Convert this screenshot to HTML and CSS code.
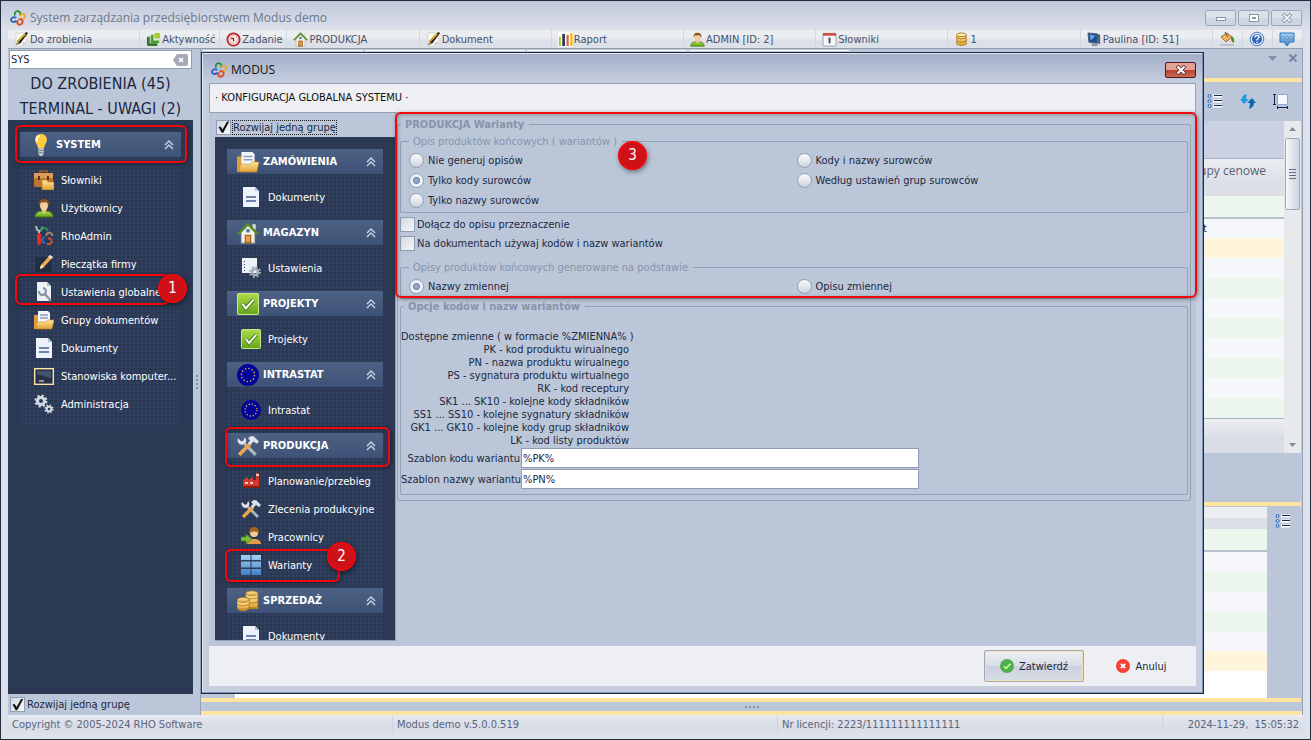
FILE: index.html
```html
<!DOCTYPE html>
<html lang="pl">
<head>
    <meta charset="UTF-8">
    <title>System zarządzania przedsiębiorstwem Modus demo</title>
    <link rel="stylesheet" href="styles.css">
</head>
<body>
<!-- icons -->
<svg class="sprite" width="0" height="0" aria-hidden="true">
    <defs>
        <linearGradient id="gold" x1="0" y1="0" x2="0" y2="1"><stop offset="0" stop-color="#ffe9a3"/><stop offset="1" stop-color="#e0a030"/></linearGradient>
        <linearGradient id="blue" x1="0" y1="0" x2="0" y2="1"><stop offset="0" stop-color="#a5d4f3"/><stop offset="1" stop-color="#3f7fc4"/></linearGradient>
        <linearGradient id="green" x1="0" y1="0" x2="0" y2="1"><stop offset="0" stop-color="#aedb4b"/><stop offset="1" stop-color="#64a51c"/></linearGradient>
    </defs>
    <symbol id="logo" viewBox="0 0 16 16">
        <g fill="none" stroke-width="1.800">
            <path d="M5 5.500C4 2 6.500 .8 8.500 1.300s2.500 2.700 1.200 4.200" stroke="#179437"/>
            <path d="M10 5.500C11 3 15 3.500 15 6.200s-2.800 4-5 2.300" stroke="#f0a818"/>
            <path d="M8.500 9.500c2.500-1 4.800.500 4 3s-4 3-5 1 0-2.500 1-3" stroke="#de4a22"/>
            <path d="M6.500 10.500c-2 2.500-5.500 1.500-5.500-.500S3.500 6 6.200 8" stroke="#2a63c4"/>
        </g>
    </symbol>
    <symbol id="note" viewBox="0 0 16 16">
        <path d="M2 1h11v10l-4 4H2z" fill="#fbfbf6" stroke="#d3d3cf"/>
        <path d="M13 11H9v4z" fill="#ccd"/>
        <path d="M2 14l2-5 9-9 2 1-8 11z" fill="#2b2418"/>
        <path d="M4 10l8-8" stroke="#d8ac34" stroke-width="1.800"/>
        <path d="M2 14l2-4 1.500 1.500z" fill="#e8c878"/>
    </symbol>
    <symbol id="layers" viewBox="0 0 16 16">
        <path d="M1 5h3v7h8v3H3q-2 0-2-2z" fill="#2f7b2a"/>
        <path d="M5 3h3v6h6v3H7q-2 0-2-2z" fill="#4f9f30"/>
        <rect x="9" y="1" width="6" height="6" rx="1" fill="#a4cf29"/>
    </symbol>
    <symbol id="clock" viewBox="0 0 16 16">
        <circle cx="8" cy="8" r="6.500" fill="#fff" stroke="#b9252b" stroke-width="2"/>
        <circle cx="8" cy="8" r="4.200" fill="#fff" stroke="#e59a9a"/>
        <path d="M5 7h3v3" fill="none" stroke="#a22" stroke-width="1.500"/>
    </symbol>
    <symbol id="house" viewBox="0 0 20 20">
        <path d="M14 2h3v5h-3z" fill="#ddd"/>
        <path d="M4 9l6-6 6 6v10H4z" fill="#f4f2ea" stroke="#b9b7aa"/>
        <path d="M1 11l9-9 9 9" fill="none" stroke="#588d24" stroke-width="2.200"/>
        <circle cx="10" cy="8" r="1.800" fill="#5379b5"/>
        <path d="M7.500 12h5v7h-5z" fill="#e29a43" stroke="#9a5a20"/>
    </symbol>
    <symbol id="chart" viewBox="0 0 16 16">
        <path d="M0 0h16v16H0z" fill="#fff"/>
        <path d="M1 5h2v10H1z" fill="#a9c522"/><path d="M4.500 2h3v13h-3z" fill="#26405a"/>
        <path d="M9 3h2.500v12H9z" fill="#e45e5e"/><path d="M13 1h2.500v14H13z" fill="#eebb0a"/>
    </symbol>
    <symbol id="user" viewBox="0 0 20 20">
        <path d="M1 19q0-5 6-6h6q6 1 6 6z" fill="url(#green)" stroke="#467a14"/>
        <path d="M7 11h6l-3 5z" fill="#f0c48a"/>
        <ellipse cx="10" cy="7.500" rx="4" ry="5" fill="#f4cf9c"/>
        <path d="M5 8Q4 1 10 1t5 7q-1-3-3-4-3 1-5 0-1 1-2 4z" fill="#87521d"/>
    </symbol>
    <symbol id="calendar" viewBox="0 0 16 16">
        <rect x="1" y="2" width="14" height="13" rx="1" fill="#f5f7fb" stroke="#8f9db5"/>
        <path d="M1 1h14v3H1z" fill="#c95245"/>
        <path d="M7 6h2v6H7z" fill="#444"/>
    </symbol>
    <symbol id="database" viewBox="0 0 16 16">
        <path d="M3 3v10q5 3 10 0V3z" fill="url(#gold)" stroke="#b07a1c"/>
        <ellipse cx="8" cy="3" rx="5" ry="2" fill="#ffeeb8" stroke="#b07a1c"/>
        <path d="M3 6q5 3 10 0M3 9.500q5 3 10 0" fill="none" stroke="#b07a1c"/>
    </symbol>
    <symbol id="monitor" viewBox="0 0 16 16">
        <path d="M1 1l10 1v10L2 11z" fill="#1c4d9c" stroke="#53606f"/>
        <path d="M3 3l6 1-5 5z" fill="#6ea6e2"/>
        <path d="M11 2l3 1v10l-3-1z" fill="#555f6e"/><path d="M5 12h5l2 3H5z" fill="#8d98a5"/>
    </symbol>
    <symbol id="bucket" viewBox="0 0 16 16">
        <path d="M2 6l6-4 5 4-6 5z" fill="#f0b35c" stroke="#a8692c"/>
        <path d="M6 1l3 5" stroke="#444"/>
        <path d="M12 5q4 1 3 7-3-1-3-5z" fill="#49922c"/>
        <path d="M1 13h14v2H1z" fill="#bdc3ca"/>
    </symbol>
    <symbol id="help" viewBox="0 0 16 16">
        <circle cx="8" cy="8" r="6.800" fill="#dfeafb" stroke="#4c7fc0"/>
        <circle cx="8" cy="8" r="5" fill="#3468b6"/>
        <path d="M6 6.500q0-2 2-2t2 1.700Q10 7.500 8 8.500v1M8 10.800v1.400" fill="none" stroke="#fff" stroke-width="1.300"/>
    </symbol>
    <symbol id="chat" viewBox="0 0 16 16">
        <path d="M1 2h14v9h-4l-3 4-3-4H1z" fill="url(#blue)" stroke="#2d78bd"/>
        <path d="M3 6h2v2H3zM7 6h2v2H7zM11 6h2v2h-2z" fill="#fff" stroke="#1d5a99" stroke-width=".500"/>
    </symbol>
    <symbol id="list" viewBox="0 0 16 16">
        <path d="M6 1.500h9v3H6zM6 6.500h9v3H6zM6 11.500h9v3H6z" fill="#fff"/>
        <path d="M7 2.500h8M7 7.500h8M7 12.500h8" stroke="#20283c"/>
        <g fill="#bfe0ff" stroke="#2d62b5"><circle cx="2.500" cy="3" r="1.500"/><circle cx="2.500" cy="8" r="1.500"/><circle cx="2.500" cy="13" r="1.500"/></g>
    </symbol>
    <symbol id="refresh" viewBox="0 0 16 16">
        <path d="M7 1Q2 2 2 6H0l4 5 5-5H6q0-3 1-5z" fill="#1b9be0"/>
        <path d="M9 16q5-2 5-6h2l-4-5-5 5h3q0 3-1 6z" fill="#0d68b0"/>
    </symbol>
    <symbol id="resize" viewBox="0 0 16 16">
        <path d="M4.500 1.500h10v10h-10z" fill="#f4f8ff" stroke="#86aade"/>
        <path d="M1.500 1v11M0 1.500h3M0 11.500h3M4 14.500h11M4.500 13v3M14.500 13v3" fill="none" stroke="#12204a"/>
    </symbol>
    <symbol id="bulb" viewBox="0 0 20 20">
        <path d="M10 0c-5 0-7 5-4 9l1.500 4h5L14 9c3-4 1-9-4-9z" fill="#ffc940"/>
        <path d="M9 2C6 2 5.500 5 7 7" fill="none" stroke="#fff3c4" stroke-width="2"/>
        <path d="M7.500 13h5v5l-1.500 2H9l-1.500-2z" fill="#c9ccd1"/>
        <path d="M7.500 15h5M7.500 17h5" stroke="#777e88"/>
    </symbol>
    <symbol id="briefcase" viewBox="0 0 20 20">
        <path d="M6 4V1h7v3" fill="none" stroke="#a35b1f" stroke-width="1.600"/>
        <rect x="0" y="3" width="19" height="14" rx="1" fill="#bd7432"/>
        <path d="M0 3h19v5H0z" fill="#dd9c5b"/><path d="M4 6h2v4H4zM13 6h2v4h-2z" fill="#61330f"/>
        <path d="M8 10h5l1 2h6v8H8z" fill="url(#gold)" stroke="#bc8028" stroke-width=".700"/>
    </symbol>
    <symbol id="knife" viewBox="0 0 20 20">
        <path d="M2 0l1 4 3 1 3-4M5 4v7" fill="none" stroke="#b8c0ca" stroke-width="1.800"/>
        <rect x="3" y="7" width="4" height="12" rx="2" fill="#e0302a"/>
        <g fill="none" stroke-width="1.800"><path d="M7 6c0-5 6-5 7-1" stroke="#1f9a45"/><path d="M12 10c1-5 7-4 6 0" stroke="#a08a6a"/><path d="M14 12c6 1 4 7-1 6" stroke="#dd5324"/><path d="M11 11c-4 1-3 6 0 6" stroke="#2c70c8"/></g>
    </symbol>
    <symbol id="pencil" viewBox="0 0 20 20">
        <path d="M1 3h16v15H1z" fill="#222e44"/>
        <path d="M6 15l1-4L16 1l3 2-9 10z" fill="#f0a850"/>
        <path d="M6 15l1-4 3 2z" fill="#fff0d0"/><path d="M14 3l2-2 3 2-2 2z" fill="#e8dcd4"/>
    </symbol>
    <symbol id="docwrench" viewBox="0 0 20 20">
        <path d="M3 0h10l4 4v15H3z" fill="#eef1f7"/><path d="M13 0v4h4z" fill="#b8c1d2"/>
        <path d="M5 9a3.500 3.500 0 1 0 4-3M10 11l7 8" fill="none" stroke="#8792a5" stroke-width="2.200"/>
    </symbol>
    <symbol id="folder" viewBox="0 0 20 20">
        <path d="M0 5h6l1 2h9v12H0z" fill="#df9b3c"/>
        <path d="M4 1h10l2 2v11H4z" fill="#f2f5fb"/><path d="M6 5h8M6 8h8" stroke="#8d9cc0" stroke-width="1.300"/>
        <path d="M2 19l1-7h9l2-2h6l-2 9z" fill="url(#gold)" stroke="#c98527" stroke-width=".600"/>
    </symbol>
    <symbol id="doc" viewBox="0 0 20 20">
        <path d="M2 0h12l4 4v16H2z" fill="#eef2fa"/><path d="M14 0v4h4z" fill="#b5bfd3"/>
        <path d="M5 10h10M5 14h10" stroke="#7083ad" stroke-width="1.800"/>
    </symbol>
    <symbol id="screen" viewBox="0 0 20 20">
        <rect x=".700" y="2.700" width="18.600" height="15.600" fill="#243149" stroke="#ffe3a0" stroke-width="1.400"/>
        <path d="M3 5h14v7L3 8z" fill="#45536d"/><path d="M5 15h5" stroke="#fff"/>
    </symbol>
    <symbol id="gears" viewBox="0 0 20 20">
        <g fill="none" stroke="#d4dae2"><circle cx="7" cy="7" r="3.500" stroke-width="3"/><circle cx="7" cy="7" r="5.500" stroke-width="2" stroke-dasharray="2.200 2.100"/>
            <circle cx="15" cy="15" r="2.300" stroke-width="2"/><circle cx="15" cy="15" r="3.800" stroke-width="1.600" stroke-dasharray="1.500 1.500"/></g>
    </symbol>
    <symbol id="docgear" viewBox="0 0 20 20">
        <path d="M1 0h15v15H1z" fill="#eef2f8"/><path d="M3.500 3v10" stroke="#34415c" stroke-dasharray="1 2"/>
        <g fill="none" stroke="#a4acb8"><circle cx="14" cy="14" r="3" stroke-width="2.500"/><circle cx="14" cy="14" r="5" stroke-width="1.800" stroke-dasharray="2 1.900"/></g>
    </symbol>
    <symbol id="check" viewBox="0 0 20 20">
        <rect x=".500" y=".500" width="19" height="19" rx="1" fill="url(#green)" stroke="#c6e884"/>
        <path d="M5 10l3 4 7-8" fill="none" stroke="#4d7d1c" stroke-width="3.600"/><path d="M5 10l3 4 7-8" fill="none" stroke="#fff" stroke-width="1.800"/>
    </symbol>
    <symbol id="eu" viewBox="0 0 20 20">
        <circle cx="10" cy="10" r="10" fill="#04049b"/>
        <circle cx="10" cy="10" r="6" fill="none" stroke="#d8b636" stroke-width="1.300" stroke-dasharray="1.300 1.840"/>
    </symbol>
    <symbol id="tools" viewBox="0 0 20 20">
        <path d="M7 8l10 10" stroke="#aab3bf" stroke-width="3"/>
        <path d="M1 3a4 4 0 0 0 6 5 4 4 0 0 0 0-6l-1 3-2 1z" fill="#dfe4ea"/>
        <path d="M2 18l10-10" stroke="#eca64d" stroke-width="3.400"/>
        <path d="M10 3q4-4 7 0l3 3-2 2-3-2-3 3-2-2 2-2z" fill="#dce2e9"/>
    </symbol>
    <symbol id="factory" viewBox="0 0 20 20">
        <path d="M2 17V9l5-3v3l5-3v3h3V2h3v15z" fill="#d5372b"/><path d="M15 4h3M4 12h3M9 12h3" stroke="#fff" stroke-width="1.500"/><path d="M2 15h16v2H2z" fill="#8f1b14"/>
    </symbol>
    <symbol id="worker" viewBox="0 0 20 20">
        <path d="M6 17q1-5 5-5h4q5 1 5 5z" fill="#e09a4b"/><circle cx="13" cy="6" r="4" fill="#f4cc9a"/>
        <path d="M8 6q0-6 5-6t5 6q-5-3-10 0z" fill="#a5631f"/>
        <path d="M0 10h5V7l6 5-6 5v-3H0z" fill="#7bbd32" stroke="#41781a" stroke-width=".600"/>
    </symbol>
    <symbol id="tiles" viewBox="0 0 20 20">
        <path d="M0 0h9.500v5H0zM10.500 0H20v5h-9.500zM0 6.500h9.500v6H0zM10.500 6.500H20v6h-9.500zM0 14h9.500v6H0zM10.500 14H20v6h-9.500z" fill="url(#blue)"/>
    </symbol>
    <symbol id="coins" viewBox="0 0 20 20">
        <g fill="url(#gold)" stroke="#aa741a" stroke-width=".700">
            <path d="M8 3v14h11V3z"/><ellipse cx="13.500" cy="3" rx="5.500" ry="2.200"/><path d="M8 7q5 2 11 0M8 11q5 2 11 0M8 15q5 2 11 0" fill="none"/>
            <path d="M0 9v8q5 4 11 0V9z"/><ellipse cx="5.500" cy="9" rx="5.500" ry="2.200"/><path d="M0 13q5 3 11 0M0 16q5 3 11 0" fill="none"/>
        </g>
    </symbol>
    <symbol id="up" viewBox="0 0 10 10">
        <path d="M1 5l4-4 4 4M1 9l4-4 4 4" fill="none" stroke="#cbd4e4" stroke-width="1.400"/>
    </symbol>
    <symbol id="cross" viewBox="0 0 10 10">
        <path d="M1.500 1.500l7 7M8.500 1.500l-7 7" fill="none" stroke="currentColor" stroke-width="2"/>
    </symbol>
    <symbol id="ok" viewBox="0 0 14 14">
        <circle cx="7" cy="7" r="7" fill="#4caf50"/><path d="M4 7.200l2 2.200 4.500-4.600" fill="none" stroke="#ccff90" stroke-width="1.600"/>
    </symbol>
    <symbol id="no" viewBox="0 0 14 14">
        <circle cx="7" cy="7" r="7" fill="#f44336"/><path d="M4.800 4.800l4.400 4.400M9.200 4.800L4.800 9.200" stroke="#fff" stroke-width="1.800"/>
    </symbol>
</svg>

<div class="app">
    <header class="titlebar">
        <svg class="ico16"><use href="#logo"/></svg>
        <h1>System zarządzania przedsiębiorstwem Modus demo</h1>
        <div class="winbtns">
            <button type="button" aria-label="Minimalizuj"><svg viewBox="0 0 12 10"><rect x="1.500" y="4.500" width="9" height="3" fill="#fff" stroke="#8a94a5"/></svg></button>
            <button type="button" aria-label="Maksymalizuj"><svg viewBox="0 0 12 10"><rect x="1.500" y="1.500" width="9" height="7" fill="#fff" stroke="#8a94a5"/><rect x="4.500" y="4.500" width="3" height="1" fill="none" stroke="#8a94a5"/></svg></button>
            <button type="button" aria-label="Zamknij"><svg viewBox="0 0 12 10"><path d="M2 1l8 8M10 1L2 9" stroke="#8a94a5" stroke-width="3.600"/><path d="M2.500 1.500l7 7M9.500 1.500l-7 7" stroke="#fff" stroke-width="1.700"/></svg></button>
        </div>
    </header>

    <nav class="toolbar">
        <button type="button" class="w132"><svg class="ico14"><use href="#note"/></svg>Do zrobienia</button>
        <button type="button" class="w80"><svg class="ico14"><use href="#layers"/></svg>Aktywność</button>
        <button type="button" class="w67"><svg class="ico14"><use href="#clock"/></svg>Zadanie</button>
        <button type="button" class="w132"><svg class="ico14"><use href="#house"/></svg>PRODUKCJA</button>
        <button type="button" class="w132"><svg class="ico14"><use href="#note"/></svg>Dokument</button>
        <button type="button" class="w132"><svg class="ico14"><use href="#chart"/></svg>Raport</button>
        <button type="button" class="w132"><svg class="ico14"><use href="#user"/></svg>ADMIN [ID: 2]</button>
        <button type="button" class="w132"><svg class="ico14"><use href="#calendar"/></svg>Słowniki</button>
        <button type="button" class="w132"><svg class="ico14"><use href="#database"/></svg>1</button>
        <button type="button" class="w132"><svg class="ico14"><use href="#monitor"/></svg>Paulina [ID: 51]</button>
        <button type="button" class="w30" aria-label="Kolor"><svg class="ico16"><use href="#bucket"/></svg></button>
        <button type="button" class="w30" aria-label="Pomoc"><svg class="ico16"><use href="#help"/></svg></button>
        <button type="button" class="w30" aria-label="Wiadomości"><svg class="ico16"><use href="#chat"/></svg></button>
    </nav>

    <main class="workspace">
        <aside class="sidebar">
            <div class="search">
                <input type="text" value="SYS" aria-label="Szukaj">
                <button type="button" aria-label="Wyczyść"><svg width="15" height="12" viewBox="0 0 15 12"><path d="M0 6l4-6h9q2 0 2 2v8q0 2-2 2H4z" fill="#a3abb7"/><path d="M6 4l4 4M10 4L6 8" stroke="#fff" stroke-width="1.700"/></svg></button>
            </div>
            <a class="counter" href="#">DO ZROBIENIA (45)</a>
            <a class="counter" href="#">TERMINAL - UWAGI (2)</a>
            <div class="navpanel">
                <section class="group">
                    <h2><svg class="ico22"><use href="#bulb"/></svg>SYSTEM<svg class="up"><use href="#up"/></svg><span class="mark mark-head"></span></h2>
                    <ul>
                        <li><a href="#"><svg class="ico20"><use href="#briefcase"/></svg>Słowniki</a></li>
                        <li><a href="#"><svg class="ico20"><use href="#user"/></svg>Użytkownicy</a></li>
                        <li><a href="#"><svg class="ico20"><use href="#knife"/></svg>RhoAdmin</a></li>
                        <li><a href="#"><svg class="ico20"><use href="#pencil"/></svg>Pieczątka firmy</a></li>
                        <li><a href="#"><svg class="ico20"><use href="#docwrench"/></svg>Ustawienia globalne</a><span class="mark mark-settings"></span><b class="badge badge-1">1</b></li>
                        <li><a href="#"><svg class="ico20"><use href="#folder"/></svg>Grupy dokumentów</a></li>
                        <li><a href="#"><svg class="ico20"><use href="#doc"/></svg>Dokumenty</a></li>
                        <li><a href="#"><svg class="ico20"><use href="#screen"/></svg>Stanowiska komputer...</a></li>
                        <li><a href="#"><svg class="ico20"><use href="#gears"/></svg>Administracja</a></li>
                    </ul>
                </section>
            </div>
            <label class="tick"><input type="checkbox" checked><span>Rozwijaj jedną grupę</span></label>
        </aside>

        <div class="splitter"><i></i><i></i><i></i><i></i></div>

        <div class="document">
            <div class="tabs">
                <span></span><span></span><span></span><span></span>
                <div class="tabtools">
                    <svg width="9" height="5" viewBox="0 0 9 5"><path d="M0 0h9L4.500 5z" fill="#8491ae"/></svg>
                    <svg width="10" height="10"><use href="#cross"/></svg>
                </div>
            </div>
            <div class="tools">
                <svg class="ico16"><use href="#list"/></svg>
                <svg class="ico16"><use href="#refresh"/></svg>
                <svg class="ico16"><use href="#resize"/></svg>
            </div>
            <div class="list">
                <table class="data">
                    <thead>
                        <tr class="band"><td></td></tr>
                        <tr class="head"><th>Grupy cenowe</th></tr>
                    </thead>
                    <tbody>
                        <tr class="filter"><td></td></tr>
                        <tr><td class="cell">t</td></tr>
                        <tr class="sel"><td></td></tr>
                        <tr><td></td></tr>
                        <tr class="alt"><td></td></tr>
                        <tr><td></td></tr>
                        <tr class="alt"><td></td></tr>
                        <tr><td></td></tr>
                        <tr class="alt"><td></td></tr>
                        <tr><td></td></tr>
                        <tr class="alt"><td></td></tr>
                    </tbody>
                    <tfoot><tr><td></td></tr></tfoot>
                </table>
                <div class="scroll">
                    <svg width="7" height="4" viewBox="0 0 7 4"><path d="M0 4h7L3.500 0z" fill="#868c9a"/></svg>
                    <div class="thumb"><i></i><i></i><i></i><i></i></div>
                    <svg width="7" height="4" viewBox="0 0 7 4"><path d="M0 0h7L3.500 4z" fill="#868c9a"/></svg>
                </div>
            </div>
            <div class="details">
                <table class="data">
                    <thead><tr class="subhead"><th></th></tr></thead>
                    <tbody>
                        <tr class="filter"><td></td></tr>
                        <tr><td></td></tr>
                        <tr class="alt"><td></td></tr>
                        <tr><td></td></tr>
                        <tr class="alt"><td></td></tr>
                        <tr><td></td></tr>
                        <tr class="sel"><td></td></tr>
                        <tr class="rest"><td></td></tr>
                    </tbody>
                </table>
                <svg class="ico16"><use href="#list"/></svg>
            </div>
            <div class="grip"><i></i><i></i><i></i><i></i></div>
        </div>

        <div class="dialog" role="dialog" aria-label="MODUS">
            <div class="dialog-title">
                <svg class="ico16"><use href="#logo"/></svg>
                <h2>MODUS</h2>
                <button type="button" class="close" aria-label="Zamknij"><svg viewBox="0 0 12 10"><path d="M2 1l8 8M10 1L2 9" stroke="#5a2a30" stroke-width="3.800"/><path d="M2.500 1.500l7 7M9.500 1.500l-7 7" stroke="#fff" stroke-width="2.200"/></svg></button>
            </div>
            <div class="dialog-head">· KONFIGURACJA GLOBALNA SYSTEMU ·</div>
            <div class="dialog-body">
                <div class="tree">
                    <label class="tick focus"><input type="checkbox" checked><span>Rozwijaj jedną grupę</span></label>
                    <div class="navpanel">
                        <section class="group">
                            <h2><svg class="ico22"><use href="#folder"/></svg>ZAMÓWIENIA<svg class="up"><use href="#up"/></svg></h2>
                            <ul><li><a href="#"><svg class="ico20"><use href="#doc"/></svg>Dokumenty</a></li></ul>
                        </section>
                        <section class="group">
                            <h2><svg class="ico22"><use href="#house"/></svg>MAGAZYN<svg class="up"><use href="#up"/></svg></h2>
                            <ul><li><a href="#"><svg class="ico20"><use href="#docgear"/></svg>Ustawienia</a></li></ul>
                        </section>
                        <section class="group">
                            <h2><svg class="ico22"><use href="#check"/></svg>PROJEKTY<svg class="up"><use href="#up"/></svg></h2>
                            <ul><li><a href="#"><svg class="ico20"><use href="#check"/></svg>Projekty</a></li></ul>
                        </section>
                        <section class="group">
                            <h2><svg class="ico22"><use href="#eu"/></svg>INTRASTAT<svg class="up"><use href="#up"/></svg></h2>
                            <ul><li><a href="#"><svg class="ico20"><use href="#eu"/></svg>Intrastat</a></li></ul>
                        </section>
                        <section class="group">
                            <h2><svg class="ico22"><use href="#tools"/></svg>PRODUKCJA<svg class="up"><use href="#up"/></svg><span class="mark mark-prod"></span></h2>
                            <ul>
                                <li><a href="#"><svg class="ico20"><use href="#factory"/></svg>Planowanie/przebieg</a></li>
                                <li><a href="#"><svg class="ico20"><use href="#tools"/></svg>Zlecenia produkcyjne</a></li>
                                <li><a href="#"><svg class="ico20"><use href="#worker"/></svg>Pracownicy</a></li>
                                <li><a href="#"><svg class="ico20"><use href="#tiles"/></svg>Warianty</a><span class="mark mark-variants"></span><b class="badge badge-2">2</b></li>
                            </ul>
                        </section>
                        <section class="group">
                            <h2><svg class="ico22"><use href="#coins"/></svg>SPRZEDAŻ<svg class="up"><use href="#up"/></svg></h2>
                            <ul><li><a href="#"><svg class="ico20"><use href="#doc"/></svg>Dokumenty</a></li></ul>
                        </section>
                    </div>
                </div>
                <form class="form">
                    <fieldset class="outer">
                        <legend>PRODUKCJA Warianty</legend>
                        <fieldset class="radios">
                            <legend>Opis produktów końcowych ( wariantów )</legend>
                            <div class="cols">
                                <label><input type="radio" name="opis">Nie generuj opisów</label>
                                <label><input type="radio" name="opis">Kody i nazwy surowców</label>
                                <label><input type="radio" name="opis" checked>Tylko kody surowców</label>
                                <label><input type="radio" name="opis">Według ustawień grup surowców</label>
                                <label><input type="radio" name="opis">Tylko nazwy surowców</label>
                            </div>
                        </fieldset>
                        <div class="ticks">
                            <label class="tick"><input type="checkbox"><span>Dołącz do opisu przeznaczenie</span></label>
                            <label class="tick"><input type="checkbox"><span>Na dokumentach używaj kodów i nazw wariantów</span></label>
                        </div>
                        <fieldset class="radios">
                            <legend>Opisy produktów końcowych generowane na podstawie</legend>
                            <div class="cols">
                                <label><input type="radio" name="podstawa" checked>Nazwy zmiennej</label>
                                <label><input type="radio" name="podstawa">Opisu zmiennej</label>
                            </div>
                        </fieldset>
                        <fieldset class="templates">
                            <legend>Opcje kodów i nazw wariantów</legend>
                            <p class="vars">
                                Dostępne zmienne ( w formacie %ZMIENNA% )<br>
                                PK - kod produktu wirualnego<br>
                                PN - nazwa produktu wirualnego<br>
                                PS - sygnatura produktu wirtualnego<br>
                                RK - kod receptury<br>
                                SK1 ... SK10 - kolejne kody składników<br>
                                SS1 ... SS10 - kolejne sygnatury składników<br>
                                GK1 ... GK10 - kolejne kody grup składników<br>
                                LK - kod listy produktów
                            </p>
                            <div class="row"><label for="kod">Szablon kodu wariantu</label><input type="text" id="kod" value="%PK%"></div>
                            <div class="row"><label for="nazwa">Szablon nazwy wariantu</label><input type="text" id="nazwa" value="%PN%"></div>
                        </fieldset>
                    </fieldset>
                    <span class="mark mark-form"></span>
                    <b class="badge badge-3">3</b>
                </form>
            </div>
            <div class="dialog-foot">
                <button type="button" class="btn primary"><svg class="ico14"><use href="#ok"/></svg>Zatwierdź</button>
                <button type="button" class="btn"><svg class="ico14"><use href="#no"/></svg>Anuluj</button>
            </div>
        </div>
    </main>

    <footer class="status">
        <span class="s1">Copyright © 2005-2024 RHO Software</span>
        <span class="s1">Modus demo v.5.0.0.519</span>
        <span class="s1">Nr licencji: 2223/111111111111111</span>
        <span class="s2">2024-11-29,&nbsp; 15:05:32</span>
    </footer>
</div>
</body>
</html>
```
FILE: styles.css
```css
* {
    margin: 0;
    padding: 0;
    box-sizing: border-box;
}

body {
    font: 11px/13px "DejaVu Sans Condensed", "DejaVu Sans", sans-serif;
    color: #1b2740;
}

button, input {
    font: inherit;
    color: inherit;
}

button {
    border: 0;
    background: none;
}

a {
    color: inherit;
    text-decoration: none;
}

ul {
    list-style: none;
}

svg {
    flex: none;
    display: block;
}

.sprite {
    position: absolute;
}

.ico14 { width: 14px; height: 14px; }
.ico16 { width: 16px; height: 16px; }
.ico20 { width: 20px; height: 20px; }
.ico22 { width: 22px; height: 22px; }

/* main window */
.app {
    min-height: 100vh;
    display: flex;
    flex-direction: column;
    border: 1px solid #222b40;
    background: #dde1ea;
}

.titlebar {
    height: 29px;
    padding: 5px 8px 0 9px;
    display: flex;
    align-items: center;
    gap: 4px;
    background: linear-gradient(#c0c7d9, #dde1ea);
}

.titlebar h1 {
    flex: 1;
    font: 12px/16px "Open Sans", sans-serif;
    color: #6c788c;
}

.winbtns {
    display: flex;
    gap: 2px;
}

.winbtns button {
    width: 31px;
    height: 16px;
    display: flex;
    align-items: center;
    justify-content: center;
    border: 1px solid #9aa8be;
    border-radius: 2px;
    background: linear-gradient(#dbe0e9 50%, #cdd5e2 50%);
}

.winbtns svg, .close svg {
    width: 12px;
    height: 10px;
}

.toolbar {
    height: 19px;
    margin: 0 7px;
    display: flex;
    border-bottom: 1px solid #959cab;
    background: linear-gradient(#ebedf1 40%, #dce0e8 60%);
    color: #475069;
}

.toolbar .ico14 {
    width: 15px;
    height: 15px;
}

.toolbar button {
    display: flex;
    align-items: center;
    gap: 1px;
    padding-left: 6px;
    border-right: 1px solid #d2d7e1;
    white-space: nowrap;
}

.w132 { flex: 132 1 132px; }
.w80 { flex: 80 1 80px; }
.w67 { flex: 67 1 67px; }
.w30 { flex: 30 1 30px; }

.workspace {
    flex: 1;
    position: relative;
    display: grid;
    grid-template-columns: 185px 7px 1fr;
    margin: 0 7px;
    background: #bbc7d8;
}

/* left menu */
.sidebar {
    display: flex;
    flex-direction: column;
}

.search {
    display: flex;
    align-items: center;
    height: 19px;
    margin: 1px 1px 2px 1px;
    padding-right: 3px;
    border: 1px solid #8f9db5;
    background: #fff;
}

.search input {
    flex: 1;
    min-width: 0;
    border: 0;
    padding-left: 1px;
    outline: 0;
}

.counter {
    font-size: 16px;
    line-height: 25px;
    text-align: center;
}

.navpanel {
    flex: 1;
    min-height: 0;
    padding: 12px;
    background: #2b3955;
    color: #fff;
}

.sidebar .navpanel {
    margin-top: -1px;
}

.group h2 {
    position: relative;
    display: flex;
    align-items: center;
    gap: 4px;
    height: 25px;
    padding: 0 7px 0 10px;
    font-size: 11px;
    background: linear-gradient(#4d6184, #3e5277);
}

.up {
    width: 10px;
    height: 10px;
    margin-left: auto;
}

.group ul {
    padding: 9px 0;
    background: radial-gradient(#324365 1px, transparent 1px) 0 0 / 4px 4px;
}

.group li {
    position: relative;
}

.group li a {
    display: flex;
    align-items: center;
    gap: 7px;
    height: 28px;
    padding-left: 14px;
    white-space: nowrap;
}

.tick {
    display: flex;
    align-items: center;
    gap: 2px;
    height: 21px;
    padding-left: 2px;
}

input[type=checkbox] {
    appearance: none;
    flex: none;
    width: 15px;
    height: 15px;
    border: 1px solid #8f9db5;
    background: linear-gradient(135deg, #d3d8e1, #f6f7f9);
}

input[type=checkbox]:checked::before {
    content: "";
    display: block;
    height: 13px;
    background: #111;
    clip-path: polygon(12% 50%, 28% 46%, 42% 70%, 78% 8%, 94% 8%, 48% 94%, 36% 94%);
}

.splitter {
    display: flex;
    flex-direction: column;
    align-items: center;
    justify-content: center;
    gap: 2px;
}

.splitter i, .grip i {
    width: 2px;
    height: 2px;
    background: #8291ab;
}

/* document area behind the dialog */
.document {
    display: flex;
    flex-direction: column;
    border-left: 1px solid #93a1b8;
    border-right: 1px solid #93a1b8;
}

.tabs {
    display: flex;
    gap: 2px;
    height: 33px;
    padding: 1px 4px 0 2px;
    border-bottom: 4px solid #ffe4a0;
}

.tabs > span {
    width: 160px;
    border-top: 1px solid #fff;
}

.tabtools {
    display: flex;
    gap: 11px;
    margin: 3px 0 0 auto;
    color: #7585a5;
}

.tabtools svg:first-child {
    margin-top: 3px;
}

.tools {
    display: flex;
    justify-content: flex-end;
    gap: 17px;
    height: 39px;
    padding: 11px 13px 0;
}

.list {
    display: flex;
    margin-right: 1px;
}

.data {
    flex: 1;
    border-collapse: collapse;
    background: #f5f7fa;
}

.data tr { height: 20px; }
.data .band { height: 37px; background: #c9d1e2; }
.data .head { height: 38px; border-top: 1px solid #a8b2c5; background: linear-gradient(#eceef2, #dcdfe7 60%); }
.data .subhead { height: 22px; background: linear-gradient(#eceef2 50%, #dcdfe7 50%); }
.data .filter { height: 22px; background: #ebf6ec; border-bottom: 2px solid #b8bfce; }
.data .alt { background: #ebf6ec; }
.data .sel { background: #fff4dc; }
.data tfoot tr { height: 35px; border-top: 1px solid #a8b2c5; background: linear-gradient(#eceef2, #dadde6 60%); }

.data th {
    padding: 4px 18px 0 0;
    font: 12px/16px "Open Sans", sans-serif;
    text-align: right;
    vertical-align: top;
    color: #5a6172;
}

.data .cell {
    padding-right: 77px;
    text-align: right;
}

.scroll {
    display: flex;
    flex-direction: column;
    align-items: center;
    width: 17px;
    padding: 6px 1px;
    background: #e8e9ec;
}

.thumb {
    width: 15px;
    height: 72px;
    margin: 7px 0 auto;
    display: flex;
    flex-direction: column;
    align-items: center;
    justify-content: center;
    gap: 1px;
    border: 1px solid #9fa5b3;
    border-radius: 2px;
    background: linear-gradient(90deg, #f6f7f9, #cdd2df);
}

.thumb i {
    width: 7px;
    height: 1px;
    margin-bottom: 1px;
    background: #666d7d;
}

.details {
    flex: 1;
    display: flex;
    align-items: flex-start;
    gap: 8px;
    margin: 49px 1px 0 0;
    padding: 1px 10px 0 34px;
    border: solid #ffe4a0;
    border-width: 4px 0;
}

.details .data {
    align-self: stretch;
    background: #fff;
}

.details tr { background: #f5f7fa; }

.details .rest {
    height: auto;
    background: #fff;
}

.details > svg {
    margin-top: 6px;
}

.grip {
    display: flex;
    justify-content: center;
    align-items: center;
    gap: 2px;
    height: 13px;
    border-bottom: 4px solid #ffe4a0;
}

/* dialog */
.dialog {
    position: absolute;
    top: 3px;
    right: 99px;
    bottom: 21px;
    left: 193px;
    display: flex;
    flex-direction: column;
    padding: 0 7px 7px;
    border: 1px solid #1d2a42;
    background: #c7cfdf;
    box-shadow: inset -1px -1px #7e93b8, inset 1px 1px #e3e8f0;
}

.dialog-title {
    display: flex;
    align-items: center;
    gap: 4px;
    height: 29px;
    margin: 1px -6px 0;
    padding: 2px 6px 0 8px;
    background: linear-gradient(#a3b0c9, #c6cedf);
}

.dialog-title h2 {
    flex: 1;
    font: 12px/16px "Open Sans", sans-serif;
    color: #111;
}

.close {
    width: 31px;
    height: 16px;
    display: flex;
    align-items: center;
    justify-content: center;
    border: 1px solid #4e1820;
    border-radius: 2px;
    background: linear-gradient(#e3a094 50%, #b8422f 50%, #cf6a54);
}

.dialog-head {
    height: 30px;
    padding: 7px 5px;
    border: 1px solid #93a1b8;
    background: #edeff3;
    color: #111;
}

.dialog-body {
    flex: 1 1 0;
    min-height: 0;
    display: flex;
    background: #bbc7d8;
}

.tree {
    width: 181px;
    margin: 0 0 5px 6px;
    display: flex;
    flex-direction: column;
    border-right: 1px solid #8f9db5;
    border-bottom: 1px solid #8f9db5;
}

.tree .tick {
    height: 24px;
    padding: 4px 0 0 1px;
}

.tree .tick span {
    outline: 1px dotted #222;
}

.tree .navpanel {
    overflow: hidden;
}

.form {
    flex: 1;
    position: relative;
    padding: 5px 5px 0 1px;
}

fieldset {
    min-width: 0;
    border: 1px solid #94a2b8;
    border-radius: 2px;
}

legend {
    padding: 0 5px 0 4px;
    color: #8793aa;
}

.outer {
    padding: 4px 2px 5px;
}

.outer > legend {
    margin-left: 1px;
    font-weight: bold;
}

.radios {
    padding: 2px 3px 2px 8px;
}

.cols {
    display: grid;
    grid-template-columns: 1fr 1fr;
}

.cols label {
    display: flex;
    align-items: center;
    gap: 4px;
    height: 20px;
}

input[type=radio] {
    appearance: none;
    width: 15px;
    height: 15px;
    border: 1px solid #8f9db5;
    border-radius: 50%;
    background: linear-gradient(#fafbfc, #cdd3de);
}

input[type=radio]:checked {
    background: radial-gradient(#93a5c6 2px, #6d82aa 3px, #eef0f4 4px);
}

.ticks {
    margin: 2px 0 8px;
}

.ticks .tick {
    height: 19px;
    padding-left: 0;
}

.templates {
    margin-top: 1px;
    padding: 17px 0 4px;
}

.templates legend {
    margin-left: 3px;
    font-weight: bold;
}

.vars {
    width: 228px;
    margin-bottom: 1px;
    text-align: right;
    white-space: nowrap;
}

.row {
    display: flex;
    align-items: center;
    gap: 1px;
    margin-bottom: 1px;
}

.row label {
    width: 119px;
    text-align: right;
    white-space: nowrap;
}

.row input {
    width: 398px;
    height: 20px;
    padding-left: 1px;
    border: 1px solid #8f9db5;
    background: #fff;
}

.dialog-foot {
    display: flex;
    justify-content: flex-end;
    align-items: center;
    gap: 12px;
    height: 40px;
    padding-right: 9px;
    background: #edeff3;
}

.btn {
    display: flex;
    align-items: center;
    justify-content: center;
    gap: 5px;
    width: 91px;
    height: 32px;
}

.primary {
    width: 100px;
    border: 1px solid #a4a9b3;
    border-radius: 2px;
    box-shadow: inset 0 0 0 1px #efe0b4;
    background: linear-gradient(#edeff2, #d9dde6 50%, #cbd1de 50%, #d8dde6);
}

/* red markers */
.mark {
    position: absolute;
    border: 2px solid #f5060c;
    border-radius: 6px;
    box-shadow: 1px 1px 4px rgba(0, 0, 0, .4), inset 1px 1px 4px rgba(0, 0, 0, .25);
    pointer-events: none;
}

.mark-head { inset: -7px -6px -6px -5px; }
.mark-settings { inset: -4px 12px 1px -5px; }
.mark-prod { inset: -6px -7px -9px -2px; }
.mark-variants { inset: -2px 43px -3px -2px; }
.mark-form { inset: -1px -1px 348px -1px; }

.badge {
    position: absolute;
    width: 29px;
    height: 29px;
    border: 2px solid #f5060c;
    border-radius: 50%;
    background: #cc1119;
    box-shadow: 1px 2px 5px rgba(0, 0, 0, .45);
    color: #fff;
    font: 15px/25px "DejaVu Sans Condensed", sans-serif;
    text-align: center;
}

.badge-1 { top: -4px; right: -6px; }
.badge-2 { top: -9px; right: 27px; }
.badge-3 { top: 28px; left: 222px; }

/* status bar */
.status {
    display: flex;
    height: 17px;
    margin: 0 7px 7px;
    background: linear-gradient(#e9ecf1, #dadee7 50%);
    color: #5a6480;
}

.status span {
    padding: 3px 4px 0;
    border-right: 1px solid #ced3de;
}

.s1 {
    flex: 385 1 385px;
}

.status .s2 {
    flex: 140 1 140px;
    text-align: right;
    border: 0;
    white-space: nowrap;
}
```
